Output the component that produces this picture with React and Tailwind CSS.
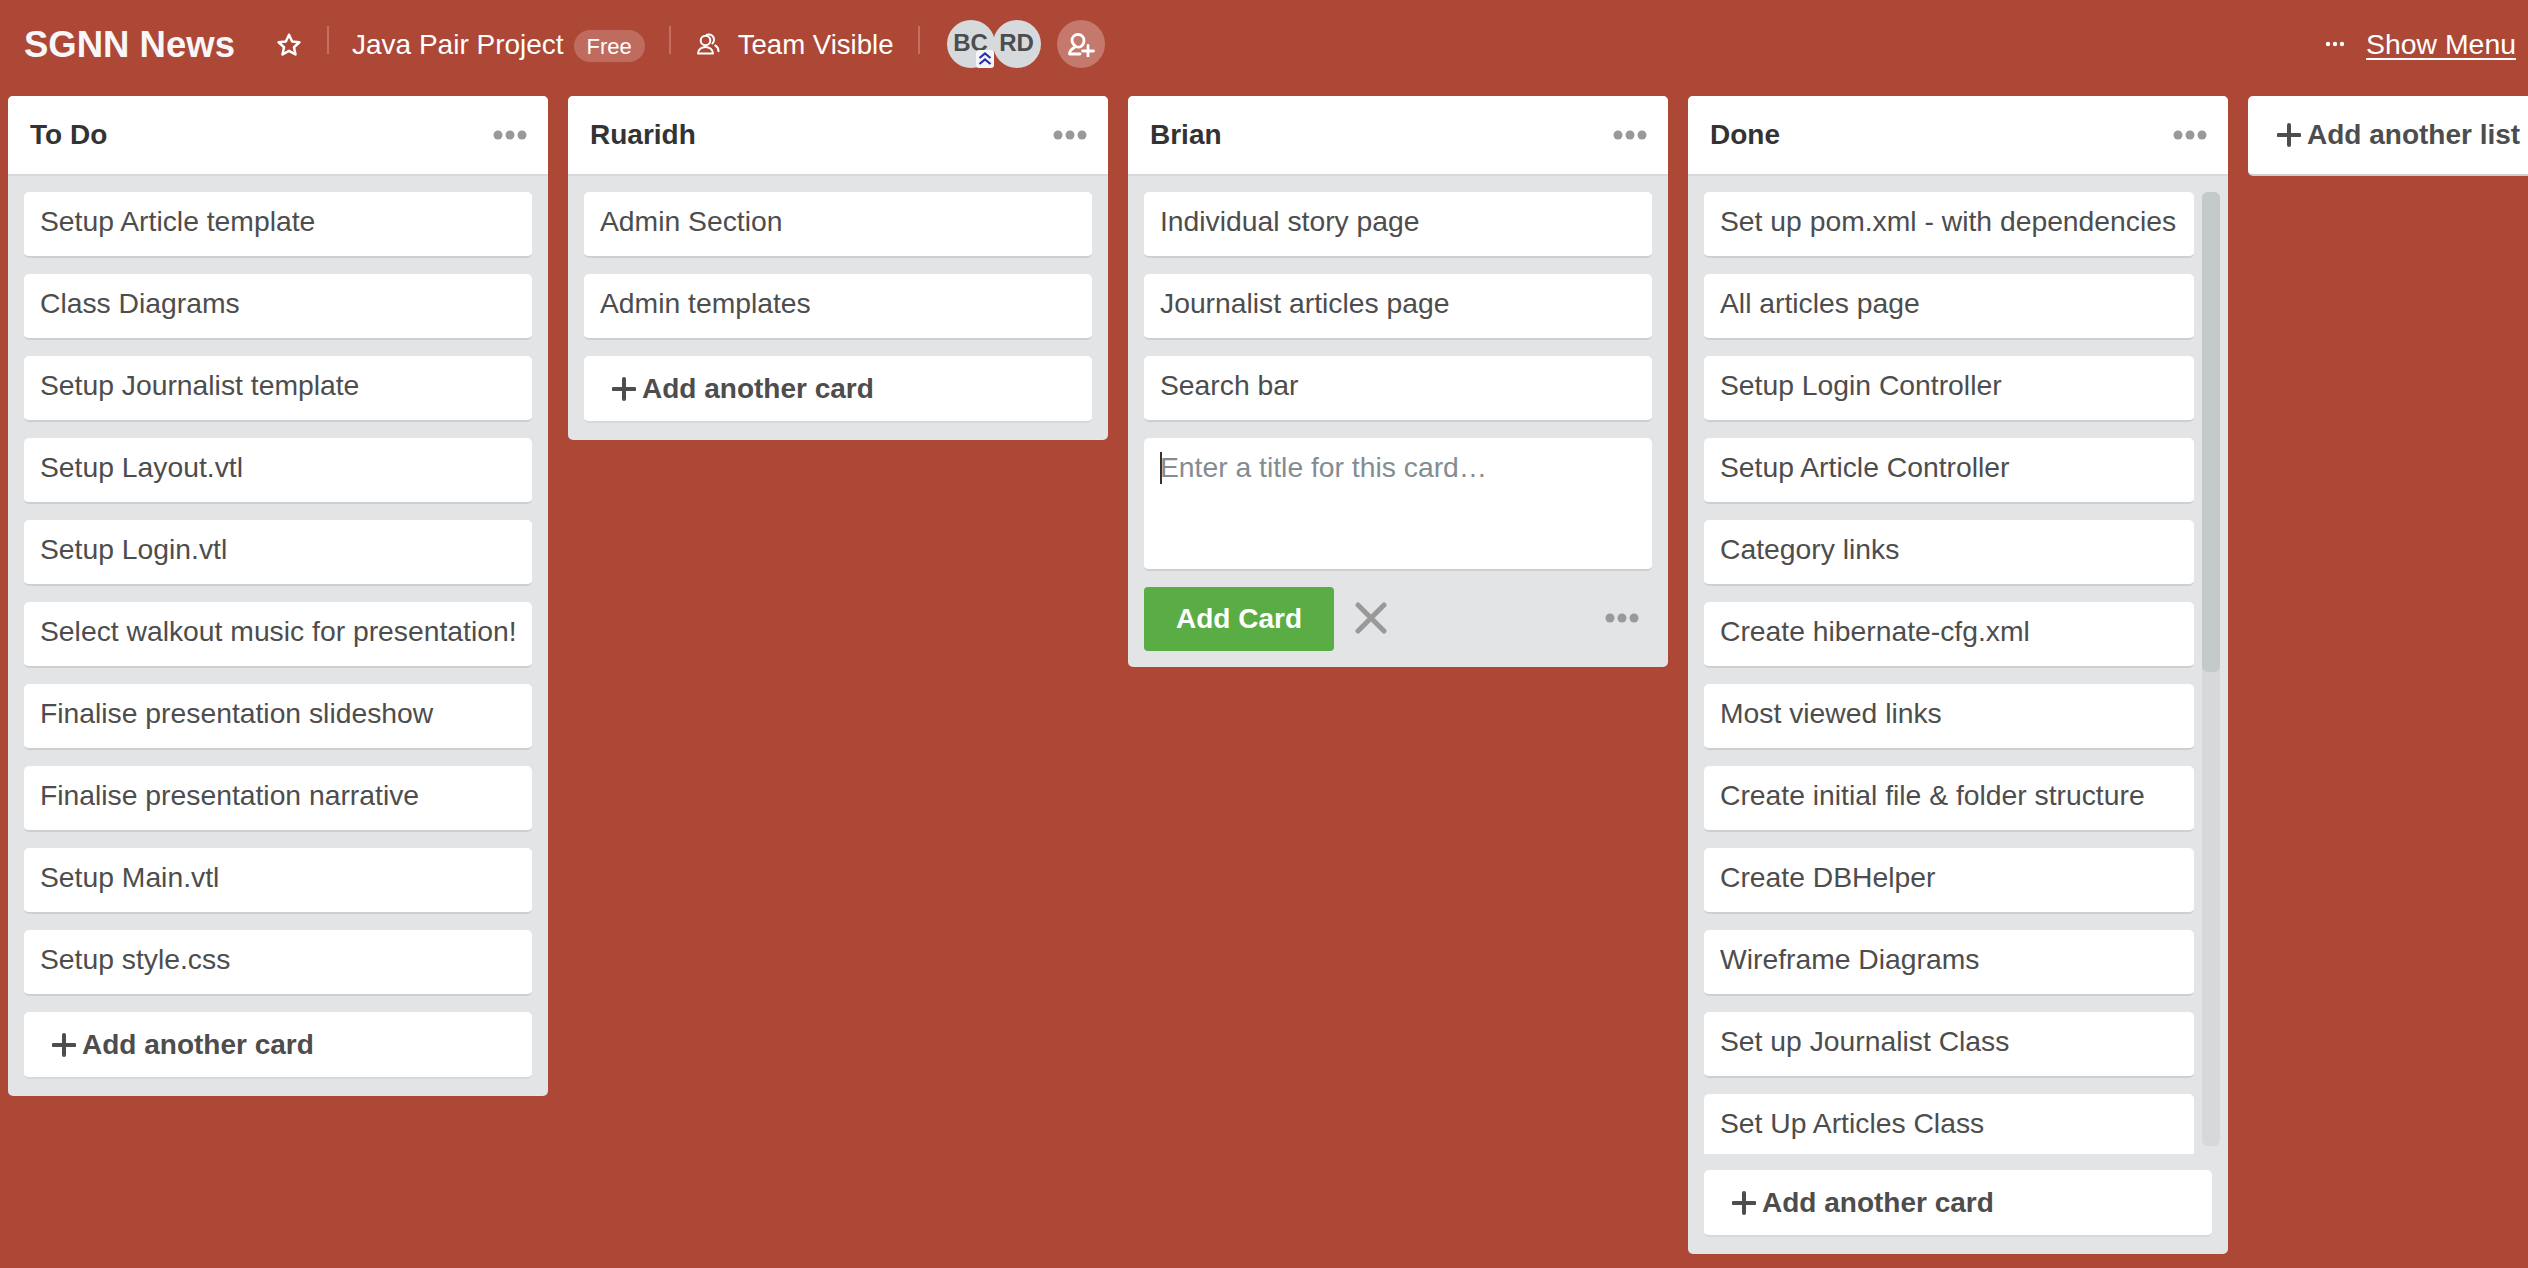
import React from "react";

const font = { fontFamily: '"Liberation Sans", Arial, sans-serif' };

const todo = ["Setup Article template","Class Diagrams","Setup Journalist template","Setup Layout.vtl","Setup Login.vtl","Select walkout music for presentation!","Finalise presentation slideshow","Finalise presentation narrative","Setup Main.vtl","Setup style.css"];
const ruaridh = ["Admin Section","Admin templates"];
const brian = ["Individual story page","Journalist articles page","Search bar"];
const done = ["Set up pom.xml - with dependencies","All articles page","Setup Login Controller","Setup Article Controller","Category links","Create hibernate-cfg.xml","Most viewed links","Create initial file & folder structure","Create DBHelper","Wireframe Diagrams","Set up Journalist Class","Set Up Articles Class"];

function Dots({ className = "" }) {
  return (
    <svg width="34" height="10" viewBox="0 0 34 10" className={className}>
      <circle cx="5" cy="5" r="4.5" fill="#999" /><circle cx="17" cy="5" r="4.5" fill="#999" /><circle cx="29" cy="5" r="4.5" fill="#999" />
    </svg>
  );
}
function Plus() {
  return (
    <svg width="24" height="24" viewBox="0 0 24 24" className="shrink-0">
      <path d="M12 2v20M1.500 12h21" stroke="#4d4d4d" strokeWidth="4" strokeLinecap="round" />
    </svg>
  );
}
function Card({ children }) {
  return (
    <div className="h-[66px] shrink-0 rounded-[5px] bg-white border-b-2 border-[#cdd0d2] px-4 pt-[11px] text-[28.3px] leading-[36px] text-[#4d4d4d] whitespace-nowrap">
      {children}
    </div>
  );
}
function AddCard() {
  return (
    <div className="h-[67px] shrink-0 rounded-[5px] bg-white border-b-2 border-[#d6d8da] pl-[28px] flex items-center gap-[6px] text-[28px] font-bold text-[#4d4d4d]">
      <Plus /><span>Add another card</span>
    </div>
  );
}
function ListHeader({ title }) {
  return (
    <div className="h-[80px] bg-white rounded-t-[5px] border-b-2 border-[#d6dadc] flex items-center justify-between pl-[22px] pr-[21px] shrink-0">
      <span className="text-[28px] font-bold text-[#333]">{title}</span>
      <Dots />
    </div>
  );
}

export default function App() {
  return (
    <div style={font} className="w-[2528px] h-[1268px] overflow-hidden bg-[#ad4736]">
      <header className="h-[96px] flex items-center pl-[24px] pr-[12px] text-white">
        <span className="text-[36.5px] font-bold text-[#f7f7f9] w-[210px] -mt-[6px] whitespace-nowrap">SGNN News</span>
        <svg width="26" height="26" viewBox="0 0 24 24" fill="none" stroke="#fff" strokeWidth="2.300" strokeLinejoin="round" className="ml-[42px] -mt-[6px]">
          <path d="M12 2.500l2.900 6.200 6.700.8-5 4.600 1.400 6.700L12 17.400l-6 3.400 1.400-6.700-5-4.600 6.700-.8z" />
        </svg>
        <div className="w-[2px] h-[28px] bg-[#c2705f] ml-[25px] -mt-[16px]" />
        <span className="text-[28px] ml-[23px] -mt-[6px] whitespace-nowrap">Java Pair Project</span>
        <span className="ml-[10px] h-[32px] w-[71px] rounded-full bg-[#bf6c5e] text-[22px] flex items-center justify-center -mt-[4px]">Free</span>
        <div className="w-[2px] h-[28px] bg-[#c2705f] ml-[24px] -mt-[16px]" />
        <svg width="24" height="22" viewBox="0 0 24 22" fill="none" stroke="#fff" strokeWidth="2" strokeLinecap="round" strokeLinejoin="round" className="ml-[25px] -mt-[8px]">
          <circle cx="9.500" cy="7.500" r="4.800" />
          <path d="M2 20.500c0-4 3.500-6.500 7.500-6.500s7.500 2.500 7.500 6.500z" />
          <path d="M11 1.800c3.800-1.200 7.300 1.300 7 5.400c-.1 1.300-.7 2.300-1.500 3.200M19.300 12.500c1.900 1 3.200 3 3.200 5.800" />
        </svg>
        <span className="text-[27.6px] ml-[18px] -mt-[6px] whitespace-nowrap">Team Visible</span>
        <div className="w-[2px] h-[28px] bg-[#c2705f] ml-[24px] -mt-[16px]" />
        <div className="relative ml-[27px] w-[48px] h-[48px] rounded-full bg-[#d6dadc] flex items-center justify-center text-[24px] font-bold text-[#4d4d4d] -mt-[8px]">
          <span className="-mt-[2px]">BC</span>
          <svg width="18" height="18" viewBox="0 0 18 18" className="absolute bottom-0 right-[1px] z-10">
            <rect x="0" y="0" width="18" height="18" rx="3" fill="#f4f5f7" />
            <path d="M3.500 8l5.500-4.500 5.500 4.500M3.500 14l5.500-4.500 5.500 4.500" fill="none" stroke="#2b2fb0" strokeWidth="2.200" />
          </svg>
        </div>
        <div className="ml-[-2px] w-[48px] h-[48px] rounded-full bg-[#d6dadc] flex items-center justify-center text-[24px] font-bold text-[#4d4d4d] -mt-[8px]">
          <span className="-mt-[2px]">RD</span>
        </div>
        <div className="ml-[16px] w-[48px] h-[48px] rounded-full bg-[#c5786c] flex items-center justify-center -mt-[8px]">
          <svg width="28" height="26" viewBox="0 0 28 26" fill="none" stroke="#fff" strokeWidth="2.800" strokeLinecap="round" strokeLinejoin="round">
            <path d="M11 3.500c3.500 0 6 2.500 6 6c0 2.500-1 4.500-3 6c-1 .8-4 .8-5 0c-2-1.500-4-3.500-4-6c0-3.500 2.500-6 6-6z" />
            <path d="M8 16C4.500 18 2.500 20 2.500 23H13" />
            <path d="M21 14.500v11M15.500 20h11" />
          </svg>
        </div>
        <div className="ml-auto flex items-center -mt-[8px]">
          <svg width="20" height="6" viewBox="0 0 20 6" className="mr-[2px]"><circle cx="3" cy="3" r="2.200" fill="#fff" /><circle cx="10" cy="3" r="2.200" fill="#fff" /><circle cx="17" cy="3" r="2.200" fill="#fff" /></svg>
          <span className="ml-[19px] text-[28.4px] underline underline-offset-[4px] decoration-[2px] whitespace-nowrap">Show Menu</span>
        </div>
      </header>

      <main className="flex items-start gap-[20px] pl-[8px]">
        <section className="w-[540px] shrink-0 bg-[#e2e4e6] rounded-[5px] flex flex-col">
          <ListHeader title="To Do" />
          <div className="flex flex-col gap-[16px] p-[16px] pb-[17px]">
            {todo.map((t) => <Card key={t}>{t}</Card>)}
            <AddCard />
          </div>
        </section>
        <section className="w-[540px] shrink-0 bg-[#e2e4e6] rounded-[5px] flex flex-col">
          <ListHeader title="Ruaridh" />
          <div className="flex flex-col gap-[16px] p-[16px] pb-[17px]">
            {ruaridh.map((t) => <Card key={t}>{t}</Card>)}
            <AddCard />
          </div>
        </section>
        <section className="w-[540px] shrink-0 bg-[#e2e4e6] rounded-[5px] flex flex-col">
          <ListHeader title="Brian" />
          <div className="flex flex-col gap-[16px] p-[16px]">
            {brian.map((t) => <Card key={t}>{t}</Card>)}
            <div className="relative h-[133px] rounded-[5px] bg-white border-b-2 border-[#cdd0d2] px-4 pt-[11px] text-[28.3px] leading-[36px] text-[#838c91]">
              Enter a title for this card…
              <div className="absolute left-[16px] top-[14px] w-[2px] h-[32px] bg-[#333]" />
            </div>
            <div className="flex items-center h-[64px]">
              <div className="w-[190px] h-[64px] rounded-[4px] bg-[#5aac44] text-white font-bold text-[28px] flex items-center justify-center">Add Card</div>
              <svg width="32" height="32" viewBox="0 0 32 32" className="ml-[21px] -mt-[2px]">
                <path d="M3 3l26 26M29 3L3 29" stroke="#999" strokeWidth="5" strokeLinecap="round" />
              </svg>
              <Dots className="ml-auto mr-[13px] -mt-[2px]" />
            </div>
          </div>
        </section>
        <section className="w-[540px] shrink-0 bg-[#e2e4e6] rounded-[5px] flex flex-col">
          <ListHeader title="Done" />
          <div className="flex pl-[16px] pr-[8px] pt-[16px] gap-[8px]">
            <div className="w-[490px] h-[962px] overflow-hidden flex flex-col gap-[16px] shrink-0">
              {done.map((t) => <Card key={t}>{t}</Card>)}
            </div>
            <div className="w-[18px] h-[954px] rounded-[6px] bg-[#d5d9dc] shrink-0">
              <div className="h-[480px] rounded-[6px] bg-[#c4c9cc]" />
            </div>
          </div>
          <div className="p-[16px] pb-[17px]"><AddCard /></div>
        </section>
        <section className="w-[300px] h-[80px] shrink-0 bg-white rounded-[5px] border-b-2 border-[#cdd0d2] flex items-center pl-[29px] gap-[6px] text-[28px] font-bold text-[#4d4d4d] whitespace-nowrap">
          <Plus /><span>Add another list</span>
        </section>
      </main>
    </div>
  );
}
